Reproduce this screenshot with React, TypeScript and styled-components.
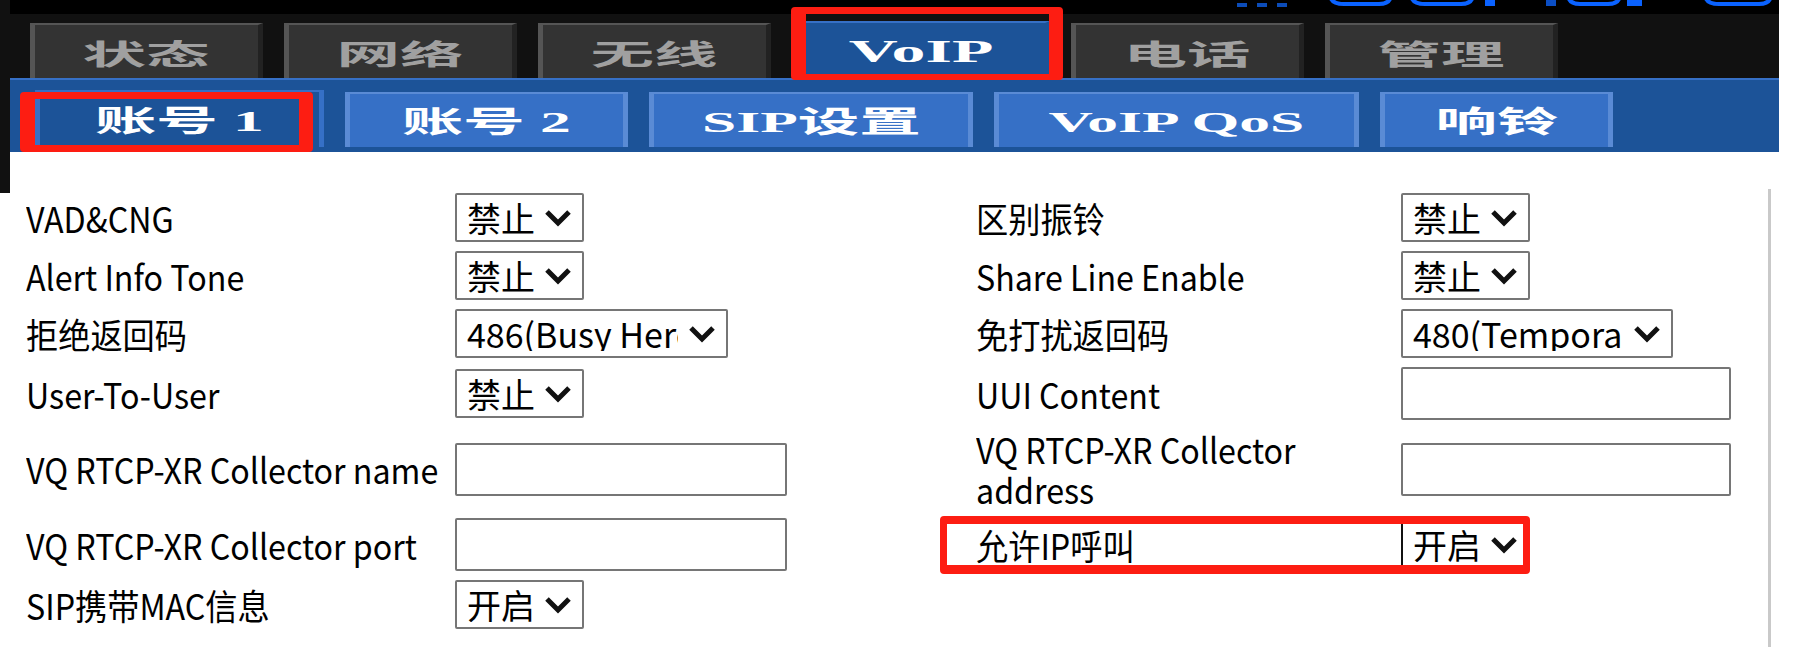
import React from "react";
import styled, { createGlobalStyle, css } from "styled-components";

const GlobalStyle = createGlobalStyle`
  html, body { margin: 0; padding: 0; background: #fff; }
  body {
    width: 1813px;
    height: 647px;
    overflow: hidden;
    font-family: "Noto Sans CJK SC", "Liberation Sans", sans-serif;
  }
  *, *::before, *::after { box-sizing: border-box; }
`;

const Page = styled.div`
  display: flex;
  align-items: flex-start;
  width: 1813px;
`;

const SideStrip = styled.div`
  flex: 0 0 10px;
  height: 193px;
  background: #111;
`;

const Main = styled.div`
  flex: 0 0 1769px;
  display: flex;
  flex-direction: column;
`;

const TopBar = styled.header`
  height: 14px;
  background: #000;
  overflow: hidden;
  svg { display: block; }
`;

const TabBar = styled.nav`
  height: 64px;
  background: #111;
  display: flex;
  align-items: flex-end;
  gap: 21px;
  padding-left: 20px;
`;

const MainTab = styled.div<{ $active?: boolean }>`
  position: relative;
  flex: 0 0 auto;
  width: ${(p) => (p.$active ? 258 : 233)}px;
  height: ${(p) => (p.$active ? 57 : 55)}px;
  display: flex;
  align-items: center;
  justify-content: center;
  background: #333;
  border-top: 2px solid #555;
  border-left: 5px solid #555;
  border-right: 5px solid #222;
  padding-top: 8px;
  color: #a0a0a0;
  ${(p) =>
    p.$active &&
    css`
      background: #1c5398;
      border-top-color: #3670c6;
      border-left-color: #1c5398;
      border-right-color: #1c5398;
      padding-top: 1px;
      color: #fff;
    `}
`;

const SubBar = styled.div`
  height: 74px;
  background: #1c5398;
  border-top: 2px solid #3670c6;
  display: flex;
  align-items: flex-end;
  gap: 21px;
  padding: 0 0 5px 25px;
`;

const SubTab = styled.div<{ $active?: boolean; $w: number }>`
  position: relative;
  flex: 0 0 auto;
  width: ${(p) => p.$w}px;
  height: ${(p) => (p.$active ? 57 : 55)}px;
  display: flex;
  align-items: center;
  justify-content: center;
  padding-top: 3px;
  color: #fff;
  background: ${(p) => (p.$active ? "#1c5398" : "#3670c6")};
  border-top: 2px solid ${(p) => (p.$active ? "#3670c6" : "#5a8bd5")};
  border-left: 5px solid ${(p) => (p.$active ? "#3670c6" : "#5a8bd5")};
  border-right: 5px solid ${(p) => (p.$active ? "#3670c6" : "#5a8bd5")};
`;

const Stretch = styled.span<{ $sx: number; $size: number }>`
  display: inline-block;
  font-family: "Liberation Serif", "Noto Sans CJK SC", serif;
  font-weight: 700;
  font-size: ${(p) => p.$size}px;
  line-height: 1;
  white-space: pre;
  transform: scaleX(${(p) => p.$sx});
`;

const RedMark = styled.span<{ $t: number; $r: number; $b: number; $l: number; $bw: string }>`
  position: absolute;
  top: ${(p) => p.$t}px;
  right: ${(p) => p.$r}px;
  bottom: ${(p) => p.$b}px;
  left: ${(p) => p.$l}px;
  border-style: solid;
  border-color: #fd1d12;
  border-width: ${(p) => p.$bw};
  border-radius: 4px;
  pointer-events: none;
`;

const Content = styled.main`
  width: 1761px;
  min-height: 458px;
  margin-top: 37px;
  padding-left: 16px;
  border-right: 3px solid #c9c9c9;
`;

const Form = styled.div`
  display: grid;
  grid-template-columns: 950px 792px;
`;

const Field = styled.div<{ $labelW: number }>`
  position: relative;
  display: grid;
  grid-template-columns: ${(p) => p.$labelW}px 1fr;
  align-items: center;
  justify-items: start;
  padding: 4px 0 5px;
`;

const Label = styled.label`
  display: inline-block;
  font-size: 35px;
  line-height: 40px;
  color: #000;
  white-space: nowrap;
  transform: scaleX(0.92);
  transform-origin: left center;
`;

const TextBox = styled.input<{ $w: number }>`
  width: ${(p) => p.$w}px;
  height: 53px;
  border: 2px solid #767676;
  border-radius: 2px;
  background: #fff;
  padding: 0 8px;
  font: inherit;
  font-size: 34px;
  outline: none;
`;

const SelectBox = styled.div<{ $w: number; $focus?: boolean }>`
  width: ${(p) => p.$w}px;
  height: 49px;
  border: 2px solid ${(p) => (p.$focus ? "#111" : "#767676")};
  border-radius: 2px;
  background: #fff;
  display: flex;
  align-items: center;
  padding: 0 10px;
  font-size: 34px;
  line-height: 1;
  color: #000;
`;

const SelectValue = styled.span`
  flex: 1;
  min-width: 0;
  overflow: hidden;
  white-space: nowrap;
`;

const ChevronIcon = styled.svg`
  flex: 0 0 28px;
  margin-left: 10px;
`;

const Chevron = () => (
  <ChevronIcon width="28" height="18" viewBox="0 0 28 18">
    <polyline points="3,3 14,14 25,3" fill="none" stroke="#111" strokeWidth="5" strokeLinejoin="miter" />
  </ChevronIcon>
);

type Ctl =
  | { kind: "select"; value: string; w: number; focus?: boolean }
  | { kind: "input"; w: number };

type Row = { label: React.ReactNode; ctl: Ctl; highlight?: boolean } | null;

const leftRows: Row[] = [
  { label: "VAD&CNG", ctl: { kind: "select", value: "禁止", w: 129 } },
  { label: "Alert Info Tone", ctl: { kind: "select", value: "禁止", w: 129 } },
  { label: "拒绝返回码", ctl: { kind: "select", value: "486(Busy Here)", w: 273 } },
  { label: "User-To-User", ctl: { kind: "select", value: "禁止", w: 129 } },
  { label: "VQ RTCP-XR Collector name", ctl: { kind: "input", w: 332 } },
  { label: "VQ RTCP-XR Collector port", ctl: { kind: "input", w: 332 } },
  { label: "SIP携带MAC信息", ctl: { kind: "select", value: "开启", w: 129 } },
];

const rightRows: Row[] = [
  { label: "区别振铃", ctl: { kind: "select", value: "禁止", w: 129 } },
  { label: "Share Line Enable", ctl: { kind: "select", value: "禁止", w: 129 } },
  { label: "免打扰返回码", ctl: { kind: "select", value: "480(Temporarily Unavailable)", w: 272 } },
  { label: "UUI Content", ctl: { kind: "input", w: 330 } },
  {
    label: (
      <>
        VQ RTCP-XR Collector
        <br />
        address
      </>
    ),
    ctl: { kind: "input", w: 330 },
  },
  { label: "允许IP呼叫", ctl: { kind: "select", value: "开启", w: 129, focus: true }, highlight: true },
  null,
];

const Control = ({ ctl }: { ctl: Ctl }) =>
  ctl.kind === "select" ? (
    <SelectBox $w={ctl.w} $focus={ctl.focus}>
      <SelectValue>{ctl.value}</SelectValue>
      <Chevron />
    </SelectBox>
  ) : (
    <TextBox $w={ctl.w} type="text" defaultValue="" />
  );

const FormField = ({ row, labelW }: { row: Row; labelW: number }) => (
  <Field $labelW={labelW}>
    {row && (
      <>
        <Label>{row.label}</Label>
        <Control ctl={row.ctl} />
        {row.highlight && <RedMark $t={2} $r={238} $b={2} $l={-36} $bw="8px 7px 9px 7px" />}
      </>
    )}
  </Field>
);

const Logo = () => (
  <svg width="1769" height="14" viewBox="0 0 1769 14">
    <g fill="#0c4cb8">
      <rect x="1227" y="3" width="10" height="4" />
      <rect x="1247" y="3" width="10" height="4" />
      <rect x="1267" y="3" width="10" height="4" />
    </g>
    <g fill="none" stroke="#0a62ff" strokeWidth="4">
      <path d="M1320 -6 Q1320 4 1334 4 L1369 4 Q1381 4 1381 -6" />
      <path d="M1401 -6 Q1401 4 1415 4 L1451 4 Q1463 4 1463 -6" />
      <path d="M1558 -6 Q1558 4 1570 4 L1598 4 Q1610 4 1610 -6" />
      <path d="M1695 -6 Q1695 4 1709 4 L1749 4 Q1761 4 1761 -6" />
    </g>
    <g fill="#0a62ff">
      <rect x="1475" y="0" width="10" height="6" />
      <rect x="1536" y="0" width="10" height="6" fill="#0b4ec4" />
      <rect x="1617" y="0" width="15" height="6" />
    </g>
  </svg>
);

const mainTabs = [
  { label: "状态" },
  { label: "网络" },
  { label: "无线" },
  { label: "VoIP", active: true },
  { label: "电话" },
  { label: "管理" },
];

const subTabs = [
  { label: "账号 1", w: 289, active: true },
  { label: "账号 2", w: 283 },
  { label: "SIP设置", w: 324 },
  { label: "VoIP QoS", w: 365 },
  { label: "响铃", w: 233 },
];

export default function App() {
  return (
    <>
      <GlobalStyle />
      <Page>
        <SideStrip />
        <Main>
          <TopBar>
            <Logo />
          </TopBar>
          <TabBar>
            {mainTabs.map((t) => (
              <MainTab key={t.label} $active={t.active}>
                {t.active ? (
                  <Stretch $size={32} $sx={2.12}>{t.label}</Stretch>
                ) : (
                  <Stretch $size={28} $sx={2.27}>{t.label}</Stretch>
                )}
                {t.active && <RedMark $t={-16} $r={-18} $b={-2} $l={-6} $bw="7px 14px 6px 15px" />}
              </MainTab>
            ))}
          </TabBar>
          <SubBar>
            {subTabs.map((t) => (
              <SubTab key={t.label} $w={t.w} $active={t.active}>
                <Stretch $size={30} $sx={2.05}>{t.label}</Stretch>
                {t.active && <RedMark $t={0} $r={6} $b={-5} $l={-20} $bw="7px 14px 7px 15px" />}
              </SubTab>
            ))}
          </SubBar>
          <Content>
            <Form>
              {leftRows.map((row, i) => (
                <React.Fragment key={i}>
                  <FormField row={row} labelW={429} />
                  <FormField row={rightRows[i]} labelW={425} />
                </React.Fragment>
              ))}
            </Form>
          </Content>
        </Main>
      </Page>
    </>
  );
}
